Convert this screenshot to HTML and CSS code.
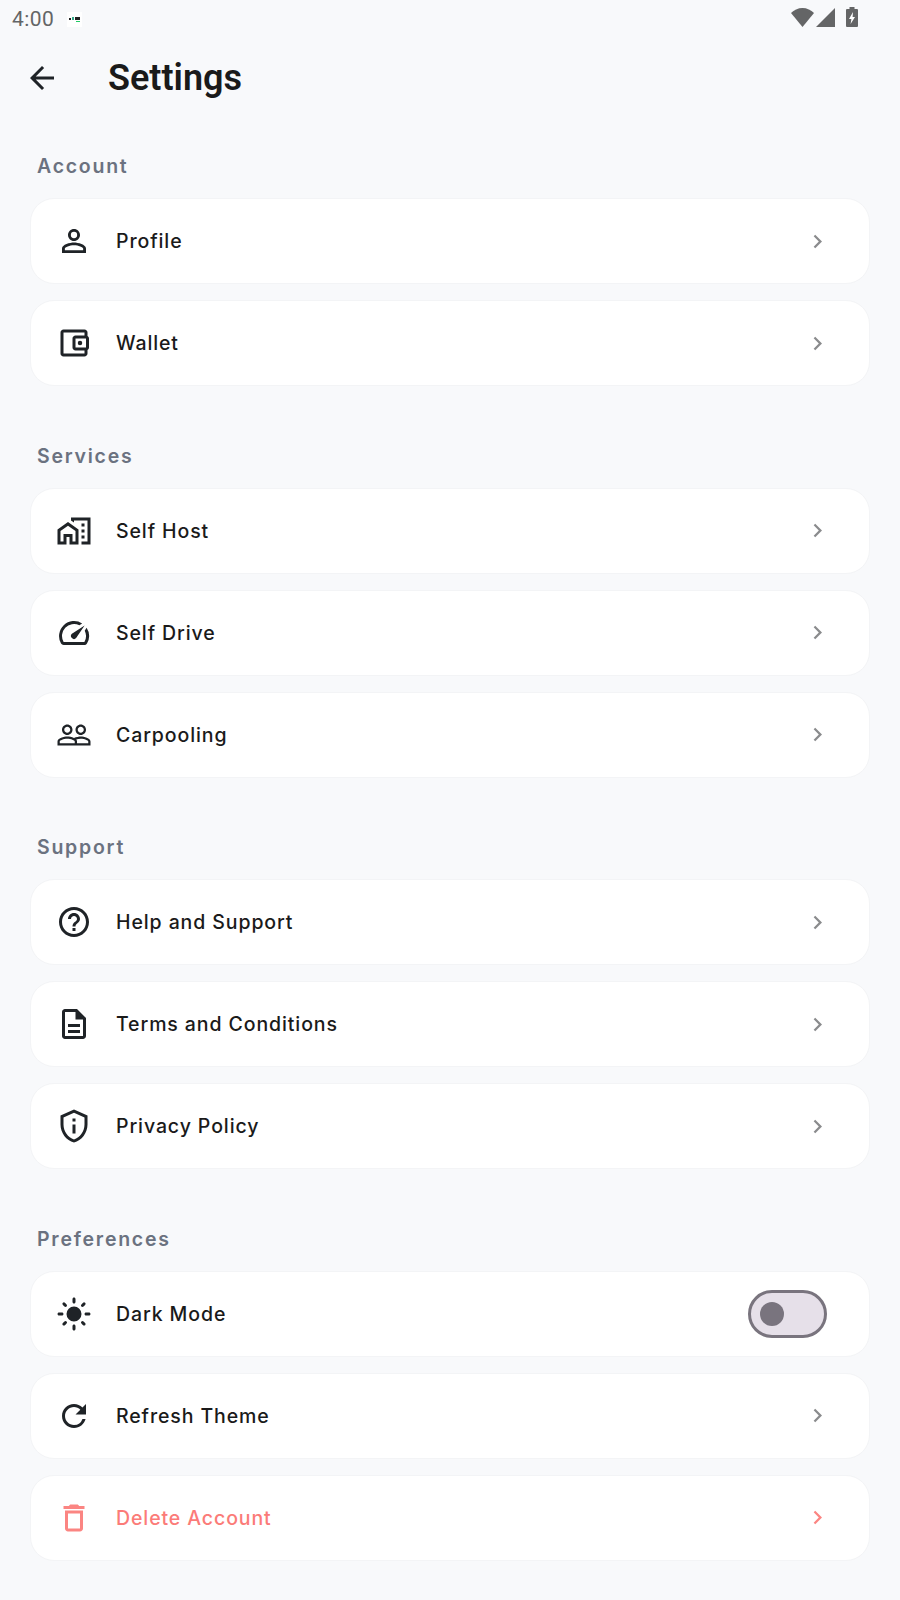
FILE: index.html
```html
<!DOCTYPE html>
<html lang="en">
<head>
    <meta charset="UTF-8">
    <meta name="viewport" content="width=device-width, initial-scale=1.0">
    <title>Settings</title>
    <link rel="stylesheet" href="styles.css">
</head>
<body>
    <svg class="sprite" width="0" height="0">
        <symbol id="chev" viewBox="0 0 24 24"><path d="M10 6 8.590 7.410 13.170 12l-4.580 4.590L10 18l6-6z"/></symbol>
    </svg>

    <div class="status-bar">
        <div class="status-left">
            <span class="clock">4:00</span>
            <svg class="app-badge" width="15" height="15" viewBox="0 0 15 15"><rect width="15" height="15" fill="#fff"/><rect x="2" y="6" width="2" height="2" fill="#222"/><rect x="5" y="5" width="2" height="3" fill="#3a8"/><rect x="8" y="5" width="5" height="3" fill="#222"/><rect x="9" y="9" width="4" height="1" fill="#2c6"/></svg>
        </div>
        <div class="status-right">
            <svg class="wifi" width="23" height="19" viewBox="0 0 23 19"><path d="M0 5C3 2 7 0 11.500 0S20 2 23 5L11.500 19z" fill="#646566"/></svg>
            <svg class="signal" width="19" height="19" viewBox="0 0 19 19"><path d="M19 0v19H0z" fill="#646566"/></svg>
            <svg class="battery" width="12" height="20" viewBox="0 0 12 20"><path d="M3.500 0h5v2H11a1 1 0 0 1 1 1v16a1 1 0 0 1-1 1H1a1 1 0 0 1-1-1V3a1 1 0 0 1 1-1h2.500z" fill="#646566"/><path d="M7 5 3 12h2.400L4.600 17 9 10H6.600z" fill="#fff"/></svg>
        </div>
    </div>

    <header class="app-bar">
        <svg class="back" width="36" height="36" viewBox="0 0 24 24"><path d="M20 11H7.830l5.590-5.590L12 4l-8 8 8 8 1.410-1.410L7.830 13H20v-2z"/></svg>
        <h1>Settings</h1>
    </header>

    <main>
        <section class="group">
            <h2>Account</h2>
            <a class="row">
                <svg class="icon" viewBox="0 0 24 24"><path d="M12 5.900a2.100 2.100 0 1 1 0 4.200 2.100 2.100 0 0 1 0-4.200m0 9c2.970 0 6.100 1.460 6.100 2.100v1.100H5.900V17c0-.64 3.130-2.100 6.100-2.100M12 4C9.790 4 8 5.790 8 8s1.790 4 4 4 4-1.790 4-4-1.790-4-4-4zm0 9c-2.670 0-8 1.340-8 4v3h16v-3c0-2.660-5.330-4-8-4z"/></svg>
                <span class="label">Profile</span>
                <svg class="chev"><use href="#chev"/></svg>
            </a>
            <a class="row">
                <svg class="icon" viewBox="0 0 24 24"><path d="M21 7.280V5c0-1.100-.9-2-2-2H5c-1.110 0-2 .9-2 2v14c0 1.100.89 2 2 2h14c1.100 0 2-.9 2-2v-2.280c.59-.35 1-.98 1-1.720V9c0-.74-.41-1.380-1-1.720zM20 9v6h-7V9h7zM5 19V5h14v2h-6c-1.100 0-2 .9-2 2v6c0 1.100.9 2 2 2h6v2H5z"/><circle cx="16" cy="12" r="1.500"/></svg>
                <span class="label">Wallet</span>
                <svg class="chev"><use href="#chev"/></svg>
            </a>
        </section>

        <section class="group">
            <h2>Services</h2>
            <a class="row">
                <svg class="icon" viewBox="0 0 24 24"><path d="M1 11v10h6v-5h2v5h6V11L8 6l-7 5zm12 8h-2v-5H5v5H3v-7l5-3.500 5 3.500v7zM10 3v1.970l2 1.430V5h9v14h-4v2h6V3H10zm9 4h-2v2h2V7zm-2 4h2v2h-2v-2zm2 4h-2v2h2v-2z"/></svg>
                <span class="label">Self Host</span>
                <svg class="chev"><use href="#chev"/></svg>
            </a>
            <a class="row">
                <svg class="icon" viewBox="0 0 24 24"><path d="m20.380 8.570-1.230 1.850a8 8 0 0 1-.22 7.580H5.070A8 8 0 0 1 15.580 6.850l1.850-1.230A10 10 0 0 0 3.350 19a2 2 0 0 0 1.720 1h13.850a2 2 0 0 0 1.740-1 10 10 0 0 0-.27-10.440zm-9.790 6.840a2 2 0 0 0 2.830 0l5.660-8.490-8.490 5.660a2 2 0 0 0 0 2.830z"/></svg>
                <span class="label">Self Drive</span>
                <svg class="chev"><use href="#chev"/></svg>
            </a>
            <a class="row">
                <svg class="icon" viewBox="0 0 24 24"><path d="M16.500 13c-1.200 0-3.070.34-4.500 1-1.430-.67-3.300-1-4.500-1C5.330 13 1 14.080 1 16.250V19h22v-2.750c0-2.170-4.330-3.250-6.500-3.250zm-4 4.500h-10v-1.250c0-.54 2.560-1.750 5-1.750s5 1.210 5 1.750v1.250zm9 0H14v-1.250c0-.46-.2-.86-.52-1.220.88-.3 1.960-.53 3.020-.53 2.440 0 5 1.210 5 1.750v1.250zM7.500 12c1.930 0 3.500-1.570 3.500-3.500S9.430 5 7.500 5 4 6.570 4 8.500 5.570 12 7.500 12zm0-5.500c1.100 0 2 .9 2 2s-.9 2-2 2-2-.9-2-2 .9-2 2-2zm9 5.500c1.930 0 3.500-1.570 3.500-3.500S18.430 5 16.500 5 13 6.570 13 8.500s1.570 3.500 3.500 3.500zm0-5.500c1.100 0 2 .9 2 2s-.9 2-2 2-2-.9-2-2 .9-2 2-2z"/></svg>
                <span class="label">Carpooling</span>
                <svg class="chev"><use href="#chev"/></svg>
            </a>
        </section>

        <section class="group">
            <h2>Support</h2>
            <a class="row">
                <svg class="icon" viewBox="0 0 24 24"><path d="M11 18h2v-2h-2v2zm1-16C6.480 2 2 6.480 2 12s4.480 10 10 10 10-4.480 10-10S17.520 2 12 2zm0 18c-4.410 0-8-3.590-8-8s3.590-8 8-8 8 3.590 8 8-3.590 8-8 8zm0-14c-2.210 0-4 1.790-4 4h2c0-1.100.9-2 2-2s2 .9 2 2c0 2-3 1.750-3 5h2c0-2.250 3-2.500 3-5 0-2.210-1.790-4-4-4z"/></svg>
                <span class="label">Help and Support</span>
                <svg class="chev"><use href="#chev"/></svg>
            </a>
            <a class="row">
                <svg class="icon" viewBox="0 0 24 24"><path d="M8 16h8v2H8zm0-4h8v2H8zm6-10H6c-1.100 0-2 .9-2 2v16c0 1.100.89 2 1.990 2H18c1.100 0 2-.9 2-2V8l-6-6zm4 18H6V4h7v5h5v11z"/></svg>
                <span class="label">Terms and Conditions</span>
                <svg class="chev"><use href="#chev"/></svg>
            </a>
            <a class="row">
                <svg class="icon" viewBox="0 0 24 24"><path d="M12 3.190l7 3.110V11c0 4.520-2.980 8.690-7 9.930-4.020-1.240-7-5.410-7-9.930V6.300l7-3.110M12 1 3 5v6c0 5.550 3.840 10.740 9 12 5.160-1.260 9-6.450 9-12V5l-9-4zm-1 6h2v2h-2zm0 4h2v6h-2z"/></svg>
                <span class="label">Privacy Policy</span>
                <svg class="chev"><use href="#chev"/></svg>
            </a>
        </section>

        <section class="group">
            <h2>Preferences</h2>
            <a class="row">
                <svg class="icon" viewBox="0 0 24 24"><path d="M12 7a5 5 0 1 0 0 10 5 5 0 0 0 0-10zM2 13h2c.55 0 1-.45 1-1s-.45-1-1-1H2c-.55 0-1 .45-1 1s.45 1 1 1zm18 0h2c.55 0 1-.45 1-1s-.45-1-1-1h-2c-.55 0-1 .45-1 1s.45 1 1 1zM11 2v2c0 .55.45 1 1 1s1-.45 1-1V2c0-.55-.45-1-1-1s-1 .45-1 1zm0 18v2c0 .55.45 1 1 1s1-.45 1-1v-2c0-.55-.45-1-1-1s-1 .45-1 1zM5.990 4.580a.996.996 0 0 0-1.410 0 .996.996 0 0 0 0 1.410l1.060 1.060c.39.39 1.030.39 1.410 0s.39-1.030 0-1.410L5.990 4.580zm12.370 12.370a.996.996 0 0 0-1.410 0 .996.996 0 0 0 0 1.410l1.060 1.060c.39.39 1.030.39 1.410 0a.996.996 0 0 0 0-1.410l-1.060-1.060zm1.060-10.960a.996.996 0 0 0 0-1.410.996.996 0 0 0-1.410 0l-1.060 1.060c-.39.39-.39 1.030 0 1.410s1.030.39 1.410 0l1.060-1.060zM7.050 18.360a.996.996 0 0 0 0-1.410.996.996 0 0 0-1.410 0l-1.060 1.060c-.39.39-.39 1.030 0 1.410s1.030.39 1.410 0l1.060-1.060z"/></svg>
                <span class="label">Dark Mode</span>
                <span class="switch"><span class="knob"></span></span>
            </a>
            <a class="row">
                <svg class="icon" viewBox="0 0 24 24"><path d="M17.650 6.350A7.958 7.958 0 0 0 12 4c-4.420 0-7.990 3.580-7.990 8s3.570 8 7.990 8c3.730 0 6.840-2.550 7.730-6h-2.080A5.990 5.990 0 0 1 12 18c-3.310 0-6-2.690-6-6s2.690-6 6-6c1.660 0 3.140.69 4.220 1.780L13 11h7V4l-2.350 2.350z"/></svg>
                <span class="label">Refresh Theme</span>
                <svg class="chev"><use href="#chev"/></svg>
            </a>
            <a class="row danger">
                <svg class="icon" viewBox="0 0 24 24"><path d="M16 9v10H8V9h8m-1.500-6h-5l-1 1H5v2h14V4h-3.500l-1-1zM18 7H6v12c0 1.100.9 2 2 2h8c1.100 0 2-.9 2-2V7z"/></svg>
                <span class="label">Delete Account</span>
                <svg class="chev"><use href="#chev"/></svg>
            </a>
        </section>
    </main>
</body>
</html>
```

FILE: styles.css
```css
/* General Styling */
body {
    margin: 0;
    background-color: #f8f9fb;
    color: #1a1a1a;
    font-family: Inter, "Noto Sans", sans-serif;
}

.sprite {
    position: absolute;
}

/* Status Bar */
.status-bar {
    height: 38px;
    padding: 0 42px 0 12px;
    display: flex;
    align-items: center;
    justify-content: space-between;
}

.status-left {
    display: flex;
    align-items: center;
    gap: 13px;
}

.clock {
    font-family: Roboto, sans-serif;
    font-size: 21px;
    letter-spacing: 0.4px;
    color: #646566;
}

.status-right {
    display: flex;
    align-items: center;
    gap: 2px;
    margin-bottom: 4px;
}

.battery {
    margin-left: 9px;
}

/* App Bar */
.app-bar {
    height: 80px;
    display: flex;
    align-items: center;
    padding-left: 24px;
}

.back {
    fill: #1f2327;
}

.app-bar h1 {
    margin: 0 0 0 48px;
    font-family: Roboto, sans-serif;
    font-size: 36px;
    font-weight: 600;
    color: #1a1a1a;
}

/* Sections */
main {
    padding: 35px 30px 0;
}

.group {
    margin-bottom: 56.500px;
}

.group h2 {
    margin: 0 0 19px;
    padding-left: 7px;
    height: 26px;
    line-height: 26px;
    font-size: 19.500px;
    font-weight: 600;
    letter-spacing: 1.750px;
    color: #6b7280;
}

/* Rows */
.row {
    box-sizing: border-box;
    height: 86px;
    margin-bottom: 16px;
    padding: 0 24px 0 25px;
    display: flex;
    align-items: center;
    gap: 24px;
    background-color: #ffffff;
    border: 1.500px solid #f3f4f6;
    border-radius: 24px;
    color: #1a1a1a;
}

.row:last-child {
    margin-bottom: 0;
}

.icon {
    width: 36px;
    height: 36px;
    flex: none;
    fill: #1f2327;
}

.label {
    flex: 1;
    font-size: 19.500px;
    font-weight: 500;
    letter-spacing: 0.900px;
}

.chev {
    width: 27px;
    height: 27px;
    margin-right: 14px;
    fill: #8a8b8d;
}

/* Toggle */
.switch {
    box-sizing: border-box;
    width: 79px;
    height: 48px;
    margin-right: 18px;
    padding-left: 9px;
    display: flex;
    align-items: center;
    background-color: #e6e0e9;
    border: 3px solid #79747e;
    border-radius: 24px;
}

.knob {
    width: 24px;
    height: 24px;
    border-radius: 50%;
    background-color: #79747e;
}

/* Delete row */
.row.danger .icon,
.row.danger .chev {
    fill: #fb8582;
}

.row.danger .label {
    color: #fb7b78;
}
```
